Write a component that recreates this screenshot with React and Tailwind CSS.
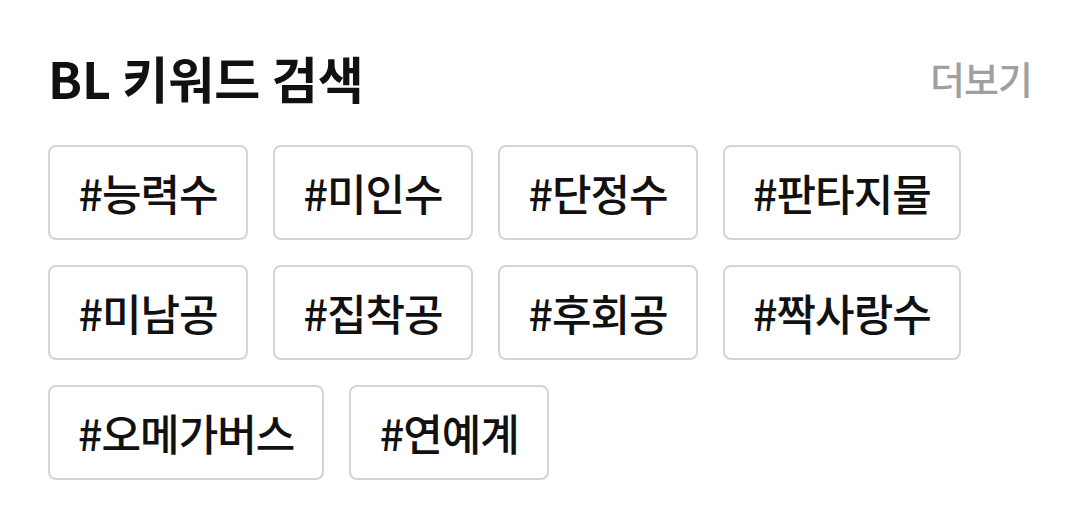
import React from 'react'

const keywords = ['능력수', '미인수', '단정수', '판타지물', '미남공', '집착공', '후회공', '짝사랑수', '오메가버스', '연예계']

export default function App() {
  return (
    <main className="w-[1080px] h-[528px] bg-white px-[48px] pt-[43px]" style={{ fontFamily: '"Noto Sans CJK KR", "Noto Sans", sans-serif' }}>
      <div className="flex items-center justify-between h-[68px]">
        <h1 className="text-[50px] font-bold text-[#111] tracking-[0px]">BL 키워드 검색</h1>
        <button type="button" className="text-[38px] font-medium text-[#a0a0a0] tracking-[-1px]">더보기</button>
      </div>
      <div className="flex flex-wrap gap-[25px] mt-[34px]">
        {keywords.map((k) => (
          <div key={k} className="min-w-[200px] h-[95px] px-[28px] flex items-center justify-center border-2 border-[#d4d4d4] rounded-[8px] text-[43px] font-medium text-[#111] tracking-[-1px]">
            #{k}
          </div>
        ))}
      </div>
    </main>
  )
}
